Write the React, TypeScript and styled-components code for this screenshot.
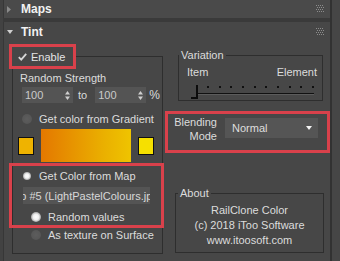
import React from "react";
import styled, { createGlobalStyle } from "styled-components";

const GlobalStyle = createGlobalStyle`
  html, body {
    margin: 0;
    padding: 0;
    background: #3f3f3f;
  }
  body {
    font-family: "Liberation Sans", Arial, sans-serif;
    font-size: 11px;
    color: #dcdcdc;
  }
`;

// Small drawings
const Grip = () => (
  <svg width="8" height="8" viewBox="0 0 8 8">
    {[0, 2, 4, 6].map((y) =>
      [0, 2, 4, 6].map((x) => (
        <rect
          key={`${x}-${y}`}
          x={x + ((y / 2) % 2)}
          y={y}
          width="1"
          height="1"
          fill="#8c8c8c"
        />
      ))
    )}
  </svg>
);

const RightArrow = () => (
  <svg width="5" height="7" viewBox="0 0 5 7">
    <path d="M0 0 L4 3.5 L0 7 Z" fill="#8a8a8a" />
  </svg>
);

const DownArrow = ({ color = "#cfcfcf" }: { color?: string }) => (
  <svg width="6" height="4" viewBox="0 0 6 4">
    <path d="M0 0 L6 0 L3 4 Z" fill={color} />
  </svg>
);

const Check = () => (
  <svg width="9" height="8" viewBox="0 0 9 8">
    <path
      d="M0.8 4.2 L3.2 6.6 L8.2 0.8"
      fill="none"
      stroke="#d6d6d6"
      strokeWidth="1.8"
    />
  </svg>
);

const SpinArrows = () => (
  <svg width="5" height="9" viewBox="0 0 5 9">
    <path d="M0 3.5 L2.5 0 L5 3.5 Z" fill="#cfcfcf" />
    <path d="M0 5.5 L2.5 9 L5 5.5 Z" fill="#cfcfcf" />
  </svg>
);

export default function App() {
  return (
    <>
      <GlobalStyle />
      <Screen>
        <Panel>
          <Header>
            <ArrowBox>
              <RightArrow />
            </ArrowBox>
            <HeaderTitle>Maps</HeaderTitle>
            <Grip />
          </Header>
          <RolloutGap />
          <Rollout>
            <Header>
              <ArrowBox>
                <DownArrow />
              </ArrowBox>
              <HeaderTitle>Tint</HeaderTitle>
              <Grip />
            </Header>
            <Body>
              <LeftGroup>
                <EnableLegend>
                  <Check />
                  <span>Enable</span>
                </EnableLegend>
                <Label>Random Strength</Label>
                <SpinnerRow>
                  <Spinner>
                    <span>100</span>
                    <SpinArrows />
                  </Spinner>
                  <ToLabel>to</ToLabel>
                  <Spinner>
                    <span>100</span>
                    <SpinArrows />
                  </Spinner>
                  <Percent>%</Percent>
                </SpinnerRow>
                <RadioRow $top={9} $indent={9}>
                  <Radio />
                  <span>Get color from Gradient</span>
                </RadioRow>
                <GradientRow>
                  <Swatch $color="#efb300" />
                  <GradientBar />
                  <Swatch $color="#f6e000" />
                </GradientRow>
                <MapHighlight>
                  <RadioRow $top={3} $indent={10}>
                    <Radio $checked $size={8} />
                    <span>Get Color from Map</span>
                  </RadioRow>
                  <MapButton>
                    <span>Map #5 (LightPastelColours.jpg)</span>
                  </MapButton>
                  <RadioRow $top={6} $indent={19}>
                    <Radio $checked />
                    <span>Random values</span>
                  </RadioRow>
                </MapHighlight>
                <RadioRow $top={0} $indent={18}>
                  <Radio />
                  <span>As texture on Surface</span>
                </RadioRow>
              </LeftGroup>

              <RightColumn>
                <VariationGroup>
                  <Legend>Variation</Legend>
                  <ItemRow>
                    <span>Item</span>
                    <span>Element</span>
                  </ItemRow>
                  <Slider>
                    <TickRow>
                      {Array.from({ length: 10 }).map((_, i) => (
                        <Tick key={i} />
                      ))}
                    </TickRow>
                    <TrackLine />
                    <Thumb />
                  </Slider>
                </VariationGroup>

                <BlendHighlight>
                  <BlendLabel>
                    Blending
                    <br />
                    Mode
                  </BlendLabel>
                  <Dropdown>
                    <span>Normal</span>
                    <DownArrow color="#f4f4f4" />
                  </Dropdown>
                </BlendHighlight>

                <AboutGroup>
                  <AboutLegend>About</AboutLegend>
                  <AboutText>
                    RailClone Color
                    <br />
                    (c) 2018 iToo Software
                    <br />
                    www.itoosoft.com
                  </AboutText>
                </AboutGroup>
              </RightColumn>
            </Body>
          </Rollout>
        </Panel>
        <ScrollStrip />
      </Screen>
    </>
  );
}

const Screen = styled.div`
  display: flex;
  width: 340px;
  height: 261px;
  overflow: hidden;
`;

const Panel = styled.div`
  width: 330px;
  padding-left: 3px;
  box-sizing: border-box;
  background: #424242;
  display: flex;
  flex-direction: column;
`;

const ScrollStrip = styled.div`
  width: 10px;
  background: #464646;
  border-left: 2px solid #323232;
  box-sizing: border-box;
`;

const Header = styled.div`
  display: flex;
  align-items: center;
  height: 18px;
  padding-right: 6px;
  background: #4a4a4a;
  border-left: 1px solid #373737;
  color: #f2f2f2;
`;

const ArrowBox = styled.div`
  width: 17px;
  padding-left: 3px;
  box-sizing: border-box;
  display: flex;
  align-items: center;
`;

const HeaderTitle = styled.div`
  flex: 1;
  font-weight: bold;
  font-size: 12px;
`;

const RolloutGap = styled.div`
  height: 4px;
  background: #3a3a3a;
`;

const Rollout = styled.div`
  flex: 1;
  background: #474747;
  border-left: 1px solid #373737;
  display: flex;
  flex-direction: column;

  & > ${Header} {
    height: 19px;
    border-left: none;
    background: #474747;
  }
`;

const Body = styled.div`
  display: flex;
  align-items: flex-start;
`;

const Group = styled.fieldset`
  margin: 0;
  padding: 0;
  border: 1px solid #2e2e2e;
  box-sizing: border-box;
  min-inline-size: 0;
`;

const LeftGroup = styled(Group)`
  width: 151px;
  height: 210px;
  margin: 3px 0 0 8px;
`;

const EnableLegend = styled.legend`
  display: flex;
  align-items: center;
  gap: 4px;
  height: 25px;
  box-sizing: border-box;
  margin-left: -4px;
  padding: 0 8px 0 6px;
  border: 3px solid #d9414b;
  font-size: 11px;
  color: #e4e4e4;
`;

const Label = styled.div`
  line-height: 14px;
  margin-top: 2px;
  padding-left: 7px;
`;

const SpinnerRow = styled.div`
  display: flex;
  align-items: center;
  height: 16px;
  margin-top: 2px;
  padding-left: 9px;
`;

const Spinner = styled.div`
  width: 51px;
  height: 16px;
  box-sizing: border-box;
  background: #545454;
  display: flex;
  align-items: center;
  justify-content: space-between;
  padding: 0 3px 0 3px;
  color: #cacaca;
`;

const ToLabel = styled.span`
  margin: 0 8px 0 5px;
`;

const Percent = styled.span`
  margin-left: 3px;
  font-size: 12px;
`;

const RadioRow = styled.div<{ $top: number; $indent: number }>`
  display: flex;
  align-items: center;
  height: 14px;
  margin-top: ${(p) => p.$top}px;
  padding-left: ${(p) => p.$indent}px;
  gap: 7px;
  white-space: nowrap;
`;

const Radio = styled.span<{ $checked?: boolean; $size?: number }>`
  display: inline-block;
  flex: none;
  width: ${(p) => p.$size ?? 10}px;
  height: ${(p) => p.$size ?? 10}px;
  margin: 0 ${(p) => (10 - (p.$size ?? 10)) / 2}px;
  border-radius: 50%;
  background: ${(p) =>
    p.$checked
      ? "radial-gradient(circle, #ffffff 0%, #f0f0f0 40%, #9a9a9a 75%, #5a5a5a 100%)"
      : "radial-gradient(circle, #5d5d5d 0%, #575757 60%, #4c4c4c 100%)"};
`;

const GradientRow = styled.div`
  display: flex;
  align-items: center;
  height: 33px;
  margin-top: 3px;
  padding-left: 5px;
`;

const Swatch = styled.div<{ $color: string }>`
  width: 16px;
  height: 18px;
  box-sizing: border-box;
  border: 1px solid #111;
  background: ${(p) => p.$color};
`;

const GradientBar = styled.div`
  width: 90px;
  height: 33px;
  margin: 0 7px;
  background: linear-gradient(to right, #e47800, #eab000 70%, #efc400);
`;

const MapHighlight = styled.div`
  height: 65px;
  box-sizing: border-box;
  margin: 1px -2px 0 -4px;
  border: 3px solid #d9414b;
`;

const MapButton = styled.div`
  width: 127px;
  height: 17px;
  margin: 4px 0 0 11px;
  padding-right: 6px;
  box-sizing: border-box;
  background: #545454;
  display: flex;
  align-items: center;
  justify-content: center;
  overflow: hidden;
  white-space: nowrap;
  color: #d8d8d8;

  & > span {
    flex: none;
  }
`;

const RightColumn = styled.div`
  width: 165px;
  margin-left: 2px;
  display: flex;
  flex-direction: column;
`;

const Legend = styled.legend`
  padding: 0 2px;
  line-height: 14px;
`;

const VariationGroup = styled(Group)`
  width: 145px;
  margin: 7px 0 0 13px;
`;

const ItemRow = styled.div`
  display: flex;
  justify-content: space-between;
  line-height: 14px;
  margin-top: 3px;
  padding: 0 5px 0 8px;
`;

const Slider = styled.div`
  position: relative;
  height: 16px;
  margin-top: 5px;
  display: flex;
  flex-direction: column;
`;

const TickRow = styled.div`
  display: flex;
  justify-content: space-between;
  margin-top: 2px;
  padding: 0 8px 0 28px;
`;

const Tick = styled.span`
  width: 2px;
  height: 2px;
  background: #101010;
`;

const TrackLine = styled.div`
  height: 1px;
  margin: 5px 8px 0 18px;
  background: #111;
  border-bottom: 1px solid #5c5c5c;
`;

const Thumb = styled.div`
  position: absolute;
  left: 12px;
  top: 1px;
  width: 7px;
  height: 14px;
  box-sizing: border-box;
  border-right: 2px solid #0c0c0c;
  border-bottom: 2px solid #0c0c0c;
`;

const BlendHighlight = styled.div`
  display: flex;
  align-items: flex-start;
  height: 42px;
  margin-top: 10px;
  box-sizing: border-box;
  border: 3px solid #d9414b;
`;

const BlendLabel = styled.div`
  width: 49px;
  padding-top: 1px;
  text-align: right;
  line-height: 14px;
  font-size: 11px;
`;

const Dropdown = styled.div`
  width: 93px;
  height: 20px;
  margin: 4px 0 0 8px;
  padding: 0 6px 0 7px;
  box-sizing: border-box;
  background: #555555;
  display: flex;
  align-items: center;
  justify-content: space-between;
  color: #dedede;
`;

const AboutGroup = styled(Group)`
  width: 149px;
  margin: 33px 0 0 10px;
  padding-bottom: 4px;
`;

const AboutLegend = styled(Legend)`
  margin-left: 2px;
`;

const AboutText = styled.div`
  padding-top: 3px;
  text-align: center;
  line-height: 15px;
`;
